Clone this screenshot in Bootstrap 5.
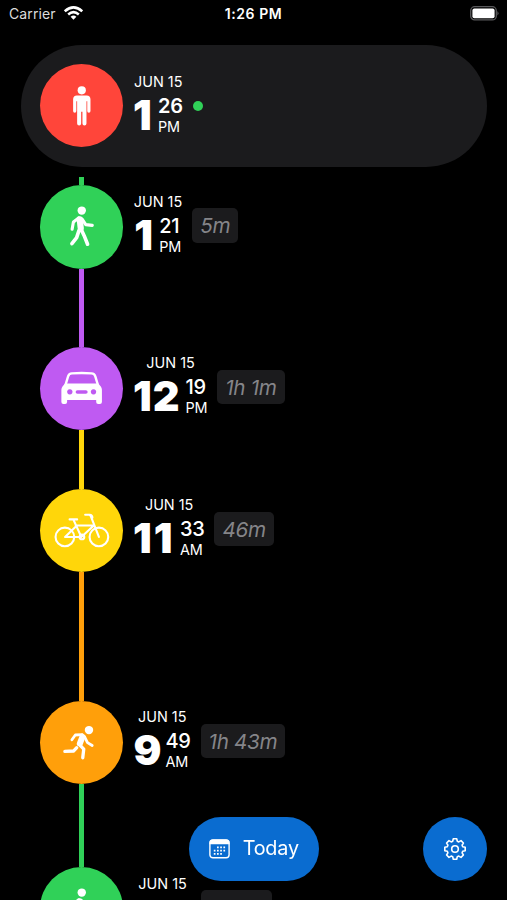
<!DOCTYPE html>
<html lang="en">
<head>
<meta charset="utf-8">
<meta name="viewport" content="width=device-width, initial-scale=1">
<title>Timeline</title>
<link href="https://cdn.jsdelivr.net/npm/bootstrap@5.3.0/dist/css/bootstrap.min.css" rel="stylesheet">
<style>
body { background:#000; color:#fff; font-family:Inter,"Liberation Sans",sans-serif; height:100vh; overflow:hidden; }
svg { display:block; }
.status { height:28px; padding:0 8px 2px 9px; font-size:14px; letter-spacing:.1px; color:#dcdcdc; }
.status .clock { font-weight:600; color:#fff; font-size:14px; letter-spacing:.6px; white-space:nowrap; margin-top:-1px; }
.now { margin:17px 20px 0 20.5px; height:121.5px; border-radius:61px; background:#1b1b1d; padding-left:19.5px; }
.track { padding-left:40px; margin-top:10.6px; height:724px; overflow:hidden; }
.stem { width:4.7px; margin-left:39.3px; }
.entry { height:83.3px; }
.disc { width:83.3px; height:83.3px; flex:none; }
.c-red { background:#ff453a; } .c-green { background:#30d158; } .c-purple { background:#bf5af2; }
.c-yellow { background:#ffd60a; } .c-orange { background:#ff9f0a; }
.s-8 { height:8.2px; } .s-78 { height:78.2px; } .s-59 { height:58.7px; } .s-129 { height:128.8px; } .s-83 { height:83.2px; }
.stamp { margin-left:10.5px; margin-top:-4px; }
.now .stamp { margin-top:-1px; }
.day { font-size:14.4px; line-height:18px; margin-bottom:2px; }
.hour { font-size:41.5px; font-weight:900; line-height:44px; width:20px; }
.one { text-indent:-.7px; }
.twelve { width:47.5px; text-indent:-.7px; letter-spacing:.8px; }
.eleven { width:42px; text-indent:-.7px; letter-spacing:1.8px; }
.nine { width:27.5px; text-indent:-.3px; }
.minute { font-size:20px; font-weight:500; line-height:22px; letter-spacing:-.3px; }
.now .minute { font-weight:600; }
.half { font-size:14.4px; line-height:18px; letter-spacing:-.2px; margin-top:1px; }
.mins { margin-left:4.2px; padding-top:2px; height:44px; }
.span-tag { margin-left:10px; margin-top:-2.5px; height:34.5px; border-radius:5px; background:#1b1b1d; color:#858589; font-size:20.7px; font-style:italic; letter-spacing:-.35px; padding:0 8px; }
.live { width:10px; height:10px; margin-left:10.5px; background:#30d158; }
.blank { width:57.5px; height:44px; } .blank-tag { width:71px; }
.actions { padding:0 20px 19.5px 189px; }
.pill { width:130px; height:64px; background:#0a6cd0; color:#fff; font-size:19.8px; letter-spacing:-.2px; gap:12.5px; }
.gear { width:64px; height:64px; background:#0a6cd0; }
</style>
<script src="https://cdn.jsdelivr.net/npm/bootstrap@5.3.0/dist/js/bootstrap.bundle.min.js"></script>
</head>
<body>
<svg width="0" height="0" class="position-absolute">
  <symbol id="walk" viewBox="0 0 83 83">
    <circle cx="41.6" cy="25.5" r="4.2" fill="#fff"/>
    <g fill="none" stroke="#fff" stroke-linecap="round" stroke-linejoin="round">
      <path stroke-width="6.2" d="M39.6 34.2 L40.6 43"/>
      <path stroke-width="3.6" d="M41 44 L44 50.5 L47.4 59 M38.8 45.5 L36.5 52.5 L31.8 58.5"/>
      <path stroke-width="3.1" d="M38.5 32.8 L33.3 36.8 L32 44 M42 34 L45.6 39.5 L52.1 40.2"/>
    </g>
  </symbol>
</svg>

<header class="status d-flex align-items-center justify-content-between position-relative">
  <div class="d-flex align-items-center gap-1"><span>Carrier</span>
    <svg class="ms-1" width="19" height="16" viewBox="0 0 20 16"><g fill="none" stroke="#fff" stroke-width="2.6"><path d="M.8 6.2 Q10 -2 19.2 6.2"/><path d="M4.4 9.6 Q10 4.6 15.6 9.6"/></g><path d="M7 12 Q10 9.3 13 12 L10 15Z" fill="#fff"/></svg>
  </div>
  <span class="clock position-absolute top-50 start-50 translate-middle">1:26 PM</span>
  <svg width="30" height="15" viewBox="0 0 30 15"><rect x="1.7" y=".7" width="25.6" height="13.2" rx="4" fill="none" stroke="#59595b" stroke-width="1.3"/><rect x="3.4" y="2.4" width="22.2" height="9.8" rx="2" fill="#fff"/><path d="M28.4 5 Q30.6 7.3 28.4 9.6Z" fill="#59595b"/></svg>
</header>

<section class="now d-flex align-items-center">
  <div class="disc c-red rounded-circle">
    <svg viewBox="0 0 83 83"><g fill="#fff"><circle cx="41.6" cy="26.2" r="4.1"/><path d="M36.8 31.3 H46.4 Q50.3 31.3 50.3 35.2 V46.8 Q50.3 48.6 48.7 48.6 Q47.1 48.6 47.1 46.8 V37 H46.3 V59.3 Q46.3 61.4 44.3 61.4 Q42.3 61.4 42.3 59.3 V47.5 H41 V59.3 Q41 61.4 39 61.4 Q37 61.4 37 59.3 V37 H36.2 V46.8 Q36.2 48.6 34.6 48.6 Q33 48.6 33 46.8 V35.2 Q33 31.3 36.8 31.3Z"/></g></svg>
  </div>
  <div class="stamp d-flex flex-column align-items-center"><div class="day">JUN 15</div><div class="d-flex"><div class="hour one">1</div><div class="mins"><div class="minute">26</div><div class="half">PM</div></div></div></div>
  <div class="live rounded-circle"></div>
</section>

<main class="track">
  <div class="stem s-8 c-green"></div>
  <div class="entry d-flex align-items-center">
    <div class="disc c-green rounded-circle"><svg viewBox="0 0 83 83"><use href="#walk"/></svg></div>
    <div class="stamp d-flex flex-column align-items-center"><div class="day">JUN 15</div><div class="d-flex"><div class="hour one">1</div><div class="mins"><div class="minute">21</div><div class="half">PM</div></div></div></div>
    <div class="span-tag d-flex align-items-center">5m</div>
  </div>
  <div class="stem s-78 c-purple"></div>
  <div class="entry d-flex align-items-center">
    <div class="disc c-purple rounded-circle"><svg viewBox="0 0 83 83">
      <path d="M25.2 38.5 L28 29.3 Q28.8 26.5 31.8 26.3 Q41.5 25.6 51.3 26.3 Q54.3 26.5 55.1 29.3 L57.9 38.5" fill="none" stroke="#fff" stroke-width="2.4"/>
      <path fill="#fff" fill-rule="evenodd" d="M25 36.3 H58 L60.4 39 Q61.7 40.5 61.7 42.5 V54.7 Q61.7 56.8 59.7 56.8 H58 Q56 56.8 56 54.7 V52.8 H27 V54.7 Q27 56.8 25 56.8 H23.3 Q21.3 56.8 21.3 54.7 V42.5 Q21.3 40.5 22.6 39Z M29.7 42 a2.7 2.7 0 1 0 .01 0Z M53.3 42 a2.7 2.7 0 1 0 .01 0Z M37.3 43 a1.7 1.7 0 0 0 0 3.6 H45.7 a1.7 1.7 0 0 0 0 -3.6Z"/></svg></div>
    <div class="stamp d-flex flex-column align-items-center"><div class="day">JUN 15</div><div class="d-flex"><div class="hour twelve">12</div><div class="mins"><div class="minute">19</div><div class="half">PM</div></div></div></div>
    <div class="span-tag d-flex align-items-center">1h 1m</div>
  </div>
  <div class="stem s-59 c-yellow"></div>
  <div class="entry d-flex align-items-center">
    <div class="disc c-yellow rounded-circle"><svg viewBox="0 0 83 83"><g fill="none" stroke="#fff" stroke-width="2.1" stroke-linecap="round" stroke-linejoin="round"><circle cx="24.8" cy="47.8" r="9.3"/><circle cx="58.7" cy="47.8" r="9.3"/><path d="M29.5 30.3 H37 M33.3 30.5 L41.2 47.8 M35.6 36.3 H53.6 L42 47 M36 37 L25 47.8 H41 M45 25.6 H48.6 Q50.2 25.7 50.7 27.2 L58.7 47.8 M49.3 25.6 Q52.3 25.8 52.2 28.6"/><circle cx="41.8" cy="47.8" r="2.3"/></g></svg></div>
    <div class="stamp d-flex flex-column align-items-center"><div class="day">JUN 15</div><div class="d-flex"><div class="hour eleven">11</div><div class="mins"><div class="minute">33</div><div class="half">AM</div></div></div></div>
    <div class="span-tag d-flex align-items-center">46m</div>
  </div>
  <div class="stem s-129 c-orange"></div>
  <div class="entry d-flex align-items-center">
    <div class="disc c-orange rounded-circle"><svg viewBox="0 0 83 83"><circle cx="48.8" cy="29" r="4.2" fill="#fff"/><g fill="none" stroke="#fff" stroke-linecap="round" stroke-linejoin="round"><path stroke-width="6" d="M42.3 35.6 L39.7 42.4"/><path stroke-width="3.3" d="M38.8 43 L43.6 48 L42.6 56.6 M36.6 46.5 L33.6 49.8 L24.8 50.2"/><path stroke-width="2.8" d="M42 33.6 L35.2 33.9 L31.8 38.6 M44.5 35.8 L47.3 41.5 L52 44.4"/></g></svg></div>
    <div class="stamp d-flex flex-column align-items-center"><div class="day">JUN 15</div><div class="d-flex"><div class="hour nine">9</div><div class="mins"><div class="minute">49</div><div class="half">AM</div></div></div></div>
    <div class="span-tag d-flex align-items-center">1h 43m</div>
  </div>
  <div class="stem s-83 c-green"></div>
  <div class="entry d-flex align-items-center">
    <div class="disc c-green rounded-circle"><svg viewBox="0 0 83 83"><use href="#walk"/></svg></div>
    <div class="stamp d-flex flex-column align-items-center"><div class="day">JUN 15</div><div class="blank"></div></div>
    <div class="span-tag blank-tag"></div>
  </div>
</main>

<nav class="actions fixed-bottom d-flex justify-content-between">
  <button class="pill btn rounded-pill border-0 d-flex align-items-center justify-content-center p-0">
    <svg width="21" height="20" viewBox="0 0 21 20"><rect x=".9" y="1" width="19.2" height="17.8" rx="3" fill="none" stroke="#fff" stroke-width="1.4"/><path d="M.5 5.2 V4 Q.5 .5 4 .5 H17 Q20.5 .5 20.5 4 V5.2Z" fill="#fff"/><g stroke="#fff" stroke-width="1.7" stroke-dasharray="1.7 1.5"><path d="M8 8.4 H17"/><path d="M4.8 11.6 H17"/><path d="M4.8 14.8 H14"/></g></svg>
    <span>Today</span>
  </button>
  <button class="gear btn rounded-circle border-0 d-flex align-items-center justify-content-center p-0" aria-label="Settings">
    <svg width="24" height="24" viewBox="-12 -12 24 24"><g fill="none" stroke="#fff" stroke-width="1.6" stroke-linejoin="round"><path d="M-2.3 -7.7 L-1.7 -10.2 H1.7 L2.3 -7.7 L3.8 -7.1 L6 -8.4 L8.4 -6 L7.1 -3.8 L7.7 -2.3 L10.2 -1.7 V1.7 L7.7 2.3 L7.1 3.8 L8.4 6 L6 8.4 L3.8 7.1 L2.3 7.7 L1.7 10.2 H-1.7 L-2.3 7.7 L-3.8 7.1 L-6 8.4 L-8.4 6 L-7.1 3.8 L-7.7 2.3 L-10.2 1.7 V-1.7 L-7.7 -2.3 L-7.1 -3.8 L-8.4 -6 L-6 -8.4 L-3.8 -7.1Z"/><circle r="3.3"/></g></svg>
  </button>
</nav>
</body>
</html>
